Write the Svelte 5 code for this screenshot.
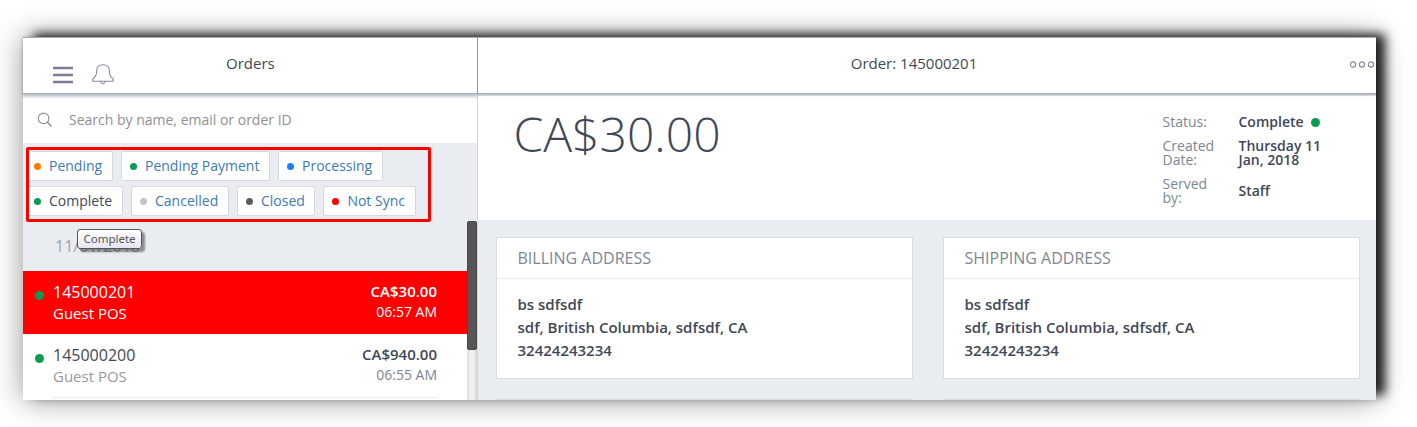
<script>
  const filters = [
    [
      { name: 'Pending', color: '#ff7a00', width: 87 },
      { name: 'Pending Payment', color: '#0a9b53', width: 149 },
      { name: 'Processing', color: '#1a7dff', width: 105 }
    ],
    [
      { name: 'Complete', color: '#0a9b53', width: 97, active: true },
      { name: 'Cancelled', color: '#c3c3c3', width: 98 },
      { name: 'Closed', color: '#5c5c5c', width: 78.4 },
      { name: 'Not Sync', color: '#ff0000', width: 93 }
    ]
  ];
  const orders = [
    { id: '145000201', total: 'CA$30.00', time: '06:57 AM', selected: true },
    { id: '145000200', total: 'CA$940.00', time: '06:55 AM', selected: false }
  ];
  const addresses = ['BILLING ADDRESS', 'SHIPPING ADDRESS'];
</script>

<main>
  <div class="window">
    <aside>
      <header class="bar">
        <svg class="menu" width="20" height="18" viewBox="0 0 20 18"><path d="M0 2h20M0 9h20M0 16h20" stroke="#7b8095" stroke-width="2.4" /></svg>
        <svg class="bell" width="22" height="21" viewBox="0 0 22 21" fill="none" stroke="#858a9e" stroke-width="1.1" stroke-linejoin="round"><path d="M11 .8C6.8.8 4.7 3.6 4.6 7.2C4.5 11.3 3.6 12.2 1.4 14.3C.5 15.2.4 17.3 1.2 17.3H20.8C21.6 17.3 21.5 15.2 20.6 14.3C18.4 12.2 17.5 11.3 17.4 7.2C17.3 3.6 15.2.8 11 .8ZM8.7 17.5C9.2 20.4 12.8 20.4 13.3 17.5" /></svg>
        <h1><span>Orders</span></h1>
      </header>
      <div class="search">
        <svg width="16" height="16" viewBox="0 0 16 16" fill="none" stroke="#8b8e9c" stroke-width="1.1"><circle cx="6.6" cy="6.4" r="5.3" /><path d="M10.4 10.3L14.6 14.5" stroke-width="1.4" /></svg>
        <span>Search by name, email or order ID</span>
      </div>
      <div class="filters">
        {#each filters as row}
          <div class="filter-row">
            {#each row as f}
              <div class="tag" class:active={f.active} style="width:{f.width}px">
                <i style="background:{f.color}"></i><span>{f.name}</span>
              </div>
            {/each}
          </div>
        {/each}
        <div class="highlight"></div>
      </div>
      <div class="list">
        <div class="rows">
          <div class="date">11/01/2018<div class="tooltip">Complete</div></div>
          {#each orders as o}
            <div class="order" class:selected={o.selected}>
              <i></i>
              <div class="order-body">
                <div class="line"><span class="id">{o.id}</span><b>{o.total}</b></div>
                <div class="line second"><span class="guest">Guest POS</span><span class="time">{o.time}</span></div>
              </div>
            </div>
          {/each}
        </div>
        <div class="track"><div class="thumb"></div></div>
      </div>
    </aside>

    <section>
      <header class="bar">
        <h1><span>Order: 145000201</span></h1>
        <svg class="more" width="26" height="9" viewBox="0 0 26 9" fill="none" stroke="#858a9e" stroke-width="1.2"><circle cx="3" cy="4.5" r="2.6" /><circle cx="12" cy="4.5" r="2.6" /><circle cx="21" cy="4.5" r="2.6" /></svg>
      </header>
      <div class="hero">
        <div class="total">CA$30.00</div>
        <dl>
          <dt>Status:</dt><dd>Complete <i></i></dd>
          <dt>Created<br />Date:</dt><dd>Thursday 11<br />Jan, 2018</dd>
          <dt>Served<br />by:</dt><dd>Staff</dd>
        </dl>
      </div>
      <div class="cards">
        {#each addresses as title}
          <article>
            <h2><span>{title}</span></h2>
            <p>bs sdfsdf<br /><span>sdf, British Columbia, sdfsdf, CA</span><br />32424243234</p>
          </article>
        {/each}
        <article class="next"></article>
        <article class="next"></article>
      </div>
    </section>
  </div>
</main>

<style>
  :global(body) { background: #fff; }
  * { box-sizing: border-box; }
  main {
    width: 1417px; height: 427px; padding: 37px 41px 27px 23px; overflow: hidden;
    font-family: "Open Sans", "Noto Sans", sans-serif; font-size: 15px; color: #414759;
  }
  .window {
    display: flex; width: 1353px; height: 363px;
    box-shadow: 10px -4px 10px -1px rgba(0, 0, 0, .85), 0 0 28px rgba(0, 0, 0, .42);
  }
  aside, section { background: #e9ecf1; overflow: hidden; display: flex; flex-direction: column; height: 363px; }
  aside { width: 455px; border-right: 1px solid #d2d3d7; flex: none; }
  section { flex: 1; }
  .bar {
    height: 57px; flex: none; position: relative; z-index: 1; background: #fff; display: flex;
    border-top: 1px solid #aaa; border-bottom: 1px solid #adb1b8; box-shadow: 0 1px 3px rgba(60, 70, 85, .45);
  }
  section .bar { box-shadow: 0 1px 2px rgba(60, 70, 85, .4); }
  aside .bar { margin-right: -1px; border-right: 1px solid #999; }
  aside { overflow: visible; }
  h1, h2 { margin: 0; font-weight: 400; }
  h1 { flex: 1; font-size: 15px; line-height: 20px; padding-top: 15px; text-align: center; }
  .menu { margin: 28px 0 0 30px; }
  .bell { margin: 26px 0 0 19px; }
  aside h1 { text-align: left; padding-left: 112px; }
  .more { margin-top: 22px; }
  .search {
    height: 45px; margin-top: 4px; flex: none; background: #fff; display: flex; align-items: center;
    padding: 0 0 2px 14px; gap: 16px; font-size: 14px; color: #909090;
  }
  .filters { position: relative; height: 78px; flex: none; padding: 8px 0 0 3px; display: flex; flex-direction: column; gap: 5px; }
  .filter-row { display: flex; gap: 8px; }
  .tag {
    height: 30px; background: #fff; border: 1px solid #d6d8dc; border-radius: 2px; display: flex; align-items: center;
    padding-left: 8px; gap: 8px; color: #4079b5; font-size: 14px; white-space: nowrap; flex: none;
  }
  .tag span { padding-bottom: 1px; }
  .filter-row .tag:first-child { padding-left: 7px; }
  .tag i { width: 7px; height: 7px; border-radius: 50%; flex: none; }
  .tag.active { color: #414759; }
  .highlight { position: absolute; left: 3px; top: 4px; width: 405px; height: 75px; border: 3px solid #f00; border-radius: 2px; z-index: 1; }
  .list { flex: 1; display: flex; min-height: 0; overflow: hidden; }
  .rows { flex: 1; background: #fff; }
  .date { position: relative; height: 50px; padding: 13px 0 0 32px; line-height: 24px; font-size: 16px; color: #a0a4ac; background: #e9ecf1; }
  .tooltip {
    position: absolute; left: 54px; top: 8px; width: 65px; height: 20px; border: 1px solid #555; border-radius: 3px;
    background: linear-gradient(#fff, #e5e5f0); box-shadow: 3px 3px 2px rgba(0, 0, 0, .4);
    color: #555; font-family: "Noto Sans", sans-serif; font-size: 11.5px; line-height: 18px; text-align: center;
  }
  .order { height: 63px; display: flex; background: #fff; padding-left: 12px; }
  .order > i { width: 9px; height: 9px; border-radius: 50%; background: #0a9b53; margin: 20px 9px 0 0; flex: none; }
  .order-body { flex: 1; height: 64px; margin-right: 30px; padding-top: 10px; border-bottom: 1px solid #e9ecf3; }
  .line { display: flex; justify-content: space-between; line-height: 22px; }
  .id { font-size: 16px; }
  b { font-weight: 600; font-size: 15px; line-height: 21px; }
  .second { line-height: 21px; }
  .guest { color: #999; font-size: 15px; }
  .time { color: #7c8795; font-size: 14px; line-height: 18px; }
  .selected { background: #f00; color: #fff; }
  .selected .order-body { border: 0; }
  .selected span { color: #fff; }
  .track { width: 10px; background: linear-gradient(90deg, #ddd, #f1f1f1 40%, #eee 70%, #d2d2d2); }
  .thumb { height: 129px; background: #555; border-radius: 2px; border: 1px solid #494949; }
  .hero { height: 124px; margin-top: 2px; flex: none; background: #fff; display: flex; justify-content: space-between; padding: 0 46.5px 0 35.5px; }
  .total { font-size: 48px; font-weight: 300; line-height: 60px; padding-top: 8px; }
  dl { margin: 0; width: 167px; padding-top: 19px; display: grid; grid-template-columns: 76px 1fr; grid-template-rows: 14px 28px 28px; row-gap: 10px; font-size: 14px; line-height: 14px; align-items: center; }
  dt { color: #7c8795; }
  dd { margin: 0; font-weight: 600; font-size: 14px; }
  dd i { display: inline-block; width: 9px; height: 9px; border-radius: 50%; background: #0a9b53; margin-left: 4px; }
  .cards { display: grid; grid-template-columns: 417px 417px; column-gap: 30px; row-gap: 20px; padding: 17px 0 0 18px; }
  article { height: 142px; background: #fff; border: 1px solid #dcdde0; }
  h2 { height: 41px; border-bottom: 1px solid #e9ecf1; padding-left: 20.5px; line-height: 41px; font-size: 16px; color: #7c8795; }
  p { margin: 0; padding: 14px 0 0 20.5px; font-weight: 600; font-size: 15px; line-height: 23px; }
</style>
